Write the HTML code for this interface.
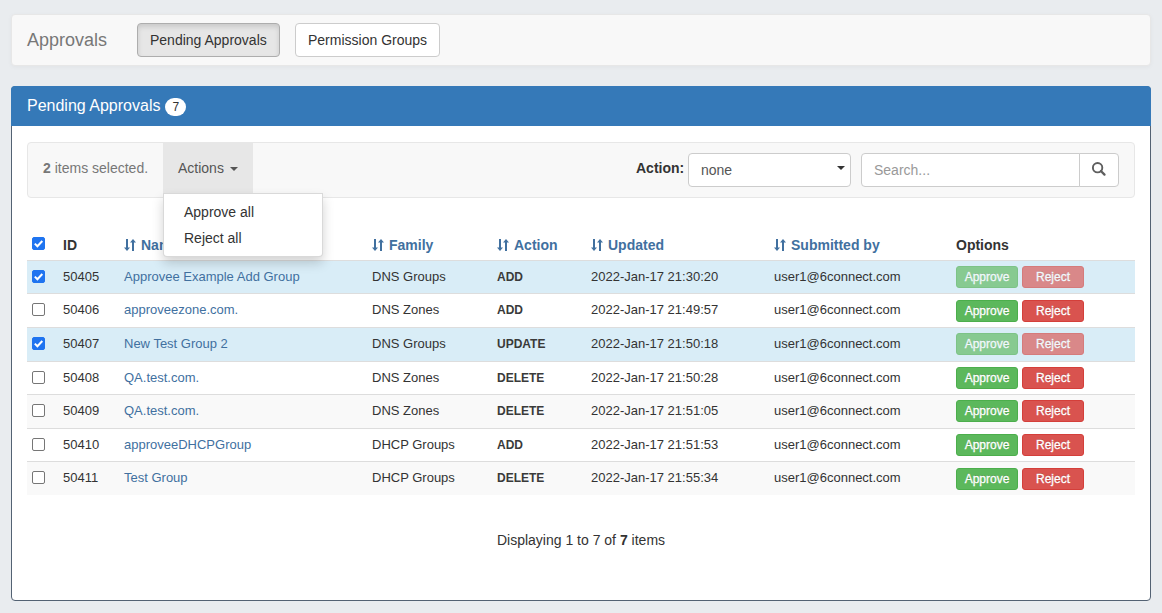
<!DOCTYPE html>
<html><head><meta charset="utf-8"><style>
*{box-sizing:border-box}
html,body{margin:0;padding:0}
body{width:1162px;height:613px;overflow:hidden;background:#e9ecef;font-family:"Liberation Sans",sans-serif;font-size:14px;color:#333;position:relative}
.nav{position:absolute;left:11px;top:14px;width:1140px;height:52px;background:#f8f8f8;border:1px solid #e7e7e7;border-radius:4px;box-shadow:0 1px 4px rgba(0,0,0,.04)}
.brand{position:absolute;left:15px;top:15px;font-size:18px;line-height:20px;color:#777}
.nbtn{position:absolute;top:8px;height:34px;border:1px solid #ccc;border-radius:4px;background:#fff;line-height:20px;padding:6px 12px;font-size:14px;color:#333;white-space:nowrap}
.nbtn.active{background:#e6e6e6;border-color:#adadad;box-shadow:inset 0 3px 5px rgba(0,0,0,.125)}
.panel{position:absolute;left:11px;top:86px;width:1140px;height:515px;background:#fff;border:1px solid #536273;border-radius:4px}
.ph{position:absolute;left:-1px;top:-1px;right:-1px;height:40px;background:#3579b8;border-radius:4px 4px 0 0}
.pt{position:absolute;left:16px;top:11px;font-size:16px;line-height:17.6px;color:#fff;white-space:nowrap}
.badge{display:inline-block;vertical-align:0;margin-left:5px;background:#fff;color:#333;font-size:12px;line-height:12px;padding:3px 7px;border-radius:10px}
.tb{position:absolute;left:15px;top:55px;width:1108px;height:56px;background:#f8f8f8;border:1px solid #e7e7e7;border-radius:4px}
.sel-txt{position:absolute;left:15px;top:15px;line-height:20px;color:#777;white-space:nowrap}
.actions{position:absolute;left:135px;top:0;width:90px;height:50px;background:#e7e7e7;color:#555;padding:15px;line-height:20px;white-space:nowrap}
.caret{display:inline-block;width:0;height:0;margin-left:2px;vertical-align:middle;border-top:4px solid #555;border-left:4px solid transparent;border-right:4px solid transparent}
.albl{position:absolute;left:608px;top:15px;line-height:20px;font-weight:bold;white-space:nowrap}
.select{position:absolute;left:660px;top:10px;width:163px;height:34px;border:1px solid #ccc;border-radius:4px;background:#fff;color:#555;padding:6px 12px;line-height:20px}
.select .dc{position:absolute;right:5px;top:12px;width:0;height:0;border-top:4px solid #333;border-left:4px solid transparent;border-right:4px solid transparent}
.search{position:absolute;left:833px;top:10px;width:219px;height:34px;border:1px solid #ccc;border-radius:4px 0 0 4px;background:#fff;color:#999;padding:6px 12px;line-height:20px}
.sbtn{position:absolute;left:1051px;top:10px;width:40px;height:34px;border:1px solid #ccc;border-radius:0 4px 4px 0;background:#fff}
.menu{position:absolute;left:163px;top:193px;width:160px;height:64px;background:#fff;border:1px solid rgba(0,0,0,.15);border-radius:0 0 4px 4px;box-shadow:0 6px 12px rgba(0,0,0,.175);padding:5px 0;z-index:5}
.menu div{padding:3px 20px;line-height:20px;color:#333;white-space:nowrap}
.tbl{position:absolute;left:0;top:0;width:1162px;height:613px}
.hd{position:absolute;left:27px;top:226px;width:1108px;height:35px;border-bottom:1px solid #ddd}
.th{position:absolute;top:9px;line-height:20px;font-size:14px;font-weight:bold;white-space:nowrap}
.th.lk{color:#41709f}
.si{vertical-align:-1px;margin-right:5px}
.row{position:absolute;left:27px;width:1108px;border-top:1px solid #ddd;font-size:13px}
.tx{position:absolute;top:6px;line-height:20px;white-space:nowrap}
.lk{color:#41709f}
.cb{position:absolute;width:13px;height:13px;border:1px solid #767676;border-radius:2px;background:#fff}
.cb.on{background:#1f74f0;border-color:#1f74f0}
.cb svg{position:absolute;left:-1px;top:-1px}
.act{font-size:12px;font-weight:bold;color:#3a3a3a}
.btns{position:absolute;white-space:nowrap;font-size:0}
.btn{display:inline-block;width:62px;height:22px;border-radius:3px;color:#fff;font-size:12px;line-height:20px;text-align:center;border:1px solid;margin-right:4px;text-shadow:0 -1px 0 rgba(0,0,0,.2);-webkit-text-stroke:0.3px #fff}
.btn.ok{background:#5cb85c;border-color:#4cae4c}
.btn.no{background:#d9534f;border-color:#d43f3a}
.dis .btn{opacity:.65}
.foot{position:absolute;left:0;right:0;top:443px;text-align:center;line-height:20px;font-size:14px}
</style></head><body>
<div class="nav">
  <div class="brand">Approvals</div>
  <div class="nbtn active" style="left:125px">Pending Approvals</div>
  <div class="nbtn" style="left:283px">Permission Groups</div>
</div>
<div class="panel">
  <div class="ph"><div class="pt">Pending Approvals<span class="badge">7</span></div></div>
  <div class="tb">
    <div class="sel-txt"><b>2</b> items selected.</div>
    <div class="actions">Actions <span class="caret"></span></div>
    <div class="albl">Action:</div>
    <div class="select">none<span class="dc"></span></div>
    <div class="search">Search...</div>
    <div class="sbtn"><svg width="38" height="32" viewBox="0 0 38 32"><circle cx="17.6" cy="13.7" r="4.7" fill="none" stroke="#5e5e5e" stroke-width="1.9"/><path d="M20.9 17l3.6 3.6" stroke="#5e5e5e" stroke-width="2.3" stroke-linecap="round"/></svg></div>
  </div>
  <div class="foot">Displaying 1 to 7 of <b>7</b> items</div>
</div>
<div class="hd">
  <span class="cb on" style="left:5px;top:11px"><svg width="13" height="13" viewBox="0 0 13 13"><path d="M2.8 6.6l2.6 2.6 4.9-5.2" fill="none" stroke="#fff" stroke-width="2"/></svg></span>
  <span class="th" style="left:36px">ID</span>
  <span class="th lk" style="left:97px"><svg class="si" width="12" height="12" viewBox="0 0 12 12"><rect x="2" y="0" width="2" height="9" fill="currentColor"/><path d="M0 8.5h6l-3 3.5z" fill="currentColor"/><rect x="8" y="3" width="2" height="9" fill="currentColor"/><path d="M6 3.5h6l-3-3.5z" fill="currentColor"/></svg>Name</span>
  <span class="th lk" style="left:345px"><svg class="si" width="12" height="12" viewBox="0 0 12 12"><rect x="2" y="0" width="2" height="9" fill="currentColor"/><path d="M0 8.5h6l-3 3.5z" fill="currentColor"/><rect x="8" y="3" width="2" height="9" fill="currentColor"/><path d="M6 3.5h6l-3-3.5z" fill="currentColor"/></svg>Family</span>
  <span class="th lk" style="left:470px"><svg class="si" width="12" height="12" viewBox="0 0 12 12"><rect x="2" y="0" width="2" height="9" fill="currentColor"/><path d="M0 8.5h6l-3 3.5z" fill="currentColor"/><rect x="8" y="3" width="2" height="9" fill="currentColor"/><path d="M6 3.5h6l-3-3.5z" fill="currentColor"/></svg>Action</span>
  <span class="th lk" style="left:564px"><svg class="si" width="12" height="12" viewBox="0 0 12 12"><rect x="2" y="0" width="2" height="9" fill="currentColor"/><path d="M0 8.5h6l-3 3.5z" fill="currentColor"/><rect x="8" y="3" width="2" height="9" fill="currentColor"/><path d="M6 3.5h6l-3-3.5z" fill="currentColor"/></svg>Updated</span>
  <span class="th lk" style="left:747px"><svg class="si" width="12" height="12" viewBox="0 0 12 12"><rect x="2" y="0" width="2" height="9" fill="currentColor"/><path d="M0 8.5h6l-3 3.5z" fill="currentColor"/><rect x="8" y="3" width="2" height="9" fill="currentColor"/><path d="M6 3.5h6l-3-3.5z" fill="currentColor"/></svg>Submitted by</span>
  <span class="th" style="left:929px">Options</span>
</div>
<div class="row" style="top:260px;height:33px;background:#d9edf7"><span class="cb on" style="left:5px;top:9px"><svg width="13" height="13" viewBox="0 0 13 13"><path d="M2.8 6.6l2.6 2.6 4.9-5.2" fill="none" stroke="#fff" stroke-width="2"/></svg></span><span class="tx" style="left:36px">50405</span><span class="tx lk" style="left:97px">Approvee Example Add Group</span><span class="tx" style="left:345px">DNS Groups</span><span class="tx act" style="left:470px">ADD</span><span class="tx" style="left:564px">2022-Jan-17 21:30:20</span><span class="tx" style="left:747px">user1@6connect.com</span><span class="btns dis" style="left:929px;top:5px"><span class="btn ok">Approve</span><span class="btn no">Reject</span></span></div>
<div class="row" style="top:293px;height:34px;background:#fff"><span class="cb" style="left:5px;top:9px"></span><span class="tx" style="left:36px">50406</span><span class="tx lk" style="left:97px">approveezone.com.</span><span class="tx" style="left:345px">DNS Zones</span><span class="tx act" style="left:470px">ADD</span><span class="tx" style="left:564px">2022-Jan-17 21:49:57</span><span class="tx" style="left:747px">user1@6connect.com</span><span class="btns" style="left:929px;top:6px"><span class="btn ok">Approve</span><span class="btn no">Reject</span></span></div>
<div class="row" style="top:327px;height:34px;background:#d9edf7"><span class="cb on" style="left:5px;top:9px"><svg width="13" height="13" viewBox="0 0 13 13"><path d="M2.8 6.6l2.6 2.6 4.9-5.2" fill="none" stroke="#fff" stroke-width="2"/></svg></span><span class="tx" style="left:36px">50407</span><span class="tx lk" style="left:97px">New Test Group 2</span><span class="tx" style="left:345px">DNS Groups</span><span class="tx act" style="left:470px">UPDATE</span><span class="tx" style="left:564px">2022-Jan-17 21:50:18</span><span class="tx" style="left:747px">user1@6connect.com</span><span class="btns dis" style="left:929px;top:5px"><span class="btn ok">Approve</span><span class="btn no">Reject</span></span></div>
<div class="row" style="top:361px;height:33px;background:#fff"><span class="cb" style="left:5px;top:9px"></span><span class="tx" style="left:36px">50408</span><span class="tx lk" style="left:97px">QA.test.com.</span><span class="tx" style="left:345px">DNS Zones</span><span class="tx act" style="left:470px">DELETE</span><span class="tx" style="left:564px">2022-Jan-17 21:50:28</span><span class="tx" style="left:747px">user1@6connect.com</span><span class="btns" style="left:929px;top:5px"><span class="btn ok">Approve</span><span class="btn no">Reject</span></span></div>
<div class="row" style="top:394px;height:34px;background:#f9f9f9"><span class="cb" style="left:5px;top:9px"></span><span class="tx" style="left:36px">50409</span><span class="tx lk" style="left:97px">QA.test.com.</span><span class="tx" style="left:345px">DNS Zones</span><span class="tx act" style="left:470px">DELETE</span><span class="tx" style="left:564px">2022-Jan-17 21:51:05</span><span class="tx" style="left:747px">user1@6connect.com</span><span class="btns" style="left:929px;top:5px"><span class="btn ok">Approve</span><span class="btn no">Reject</span></span></div>
<div class="row" style="top:428px;height:33px;background:#fff"><span class="cb" style="left:5px;top:9px"></span><span class="tx" style="left:36px">50410</span><span class="tx lk" style="left:97px">approveeDHCPGroup</span><span class="tx" style="left:345px">DHCP Groups</span><span class="tx act" style="left:470px">ADD</span><span class="tx" style="left:564px">2022-Jan-17 21:51:53</span><span class="tx" style="left:747px">user1@6connect.com</span><span class="btns" style="left:929px;top:5px"><span class="btn ok">Approve</span><span class="btn no">Reject</span></span></div>
<div class="row" style="top:461px;height:34px;background:#f9f9f9"><span class="cb" style="left:5px;top:9px"></span><span class="tx" style="left:36px">50411</span><span class="tx lk" style="left:97px">Test Group</span><span class="tx" style="left:345px">DHCP Groups</span><span class="tx act" style="left:470px">DELETE</span><span class="tx" style="left:564px">2022-Jan-17 21:55:34</span><span class="tx" style="left:747px">user1@6connect.com</span><span class="btns" style="left:929px;top:6px"><span class="btn ok">Approve</span><span class="btn no">Reject</span></span></div>
<div class="menu"><div>Approve all</div><div>Reject all</div></div>
</body></html>
